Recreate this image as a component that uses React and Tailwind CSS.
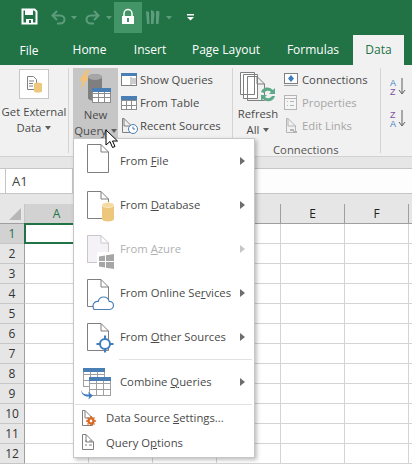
import { Fragment } from "react";

const FONT = "font-['Open_Sans','Noto_Sans',sans-serif]";

const Doc = ({ x = 12, y = 8, w = 21, h = 27, color = "#7f7f7f", fill = "none" }) => (
  <path
    d={`M${x + 0.5} ${y + 0.5}H${x + w - 7}L${x + w + 0.5} ${y + 8}V${y + h + 0.5}H${x + 0.5}ZM${x + w - 7} ${y + 0.5}V${y + 8}H${x + w + 0.5}`}
    fill={fill}
    stroke={color}
  />
);

const FileIcon = () => (
  <svg width="45" height="44" className="shrink-0">
    <Doc y={5} h={28} />
  </svg>
);

const DbIcon = () => (
  <svg width="45" height="44" className="shrink-0">
    <Doc y={8} />
    <path d="M27 22a6 2.500 0 0 1 12 0v14a6 2.500 0 0 1-12 0z" fill="#edc77c" />
    <ellipse cx="33" cy="22" rx="6" ry="2.500" fill="#f5d99f" stroke="#fff" strokeWidth="0.5" />
  </svg>
);

const AzureIcon = () => (
  <svg width="45" height="44" className="shrink-0">
    <Doc y={8} color="#c8c6c9" fill="#f4f2f6" />
    <path d="M22 25h18v17H22z" fill="#fff" />
    <path d="M24 29.500l6-1v5.500h-6zM31 28.300l8-1.300v7h-8zM24 35h6v5.500l-6-1zM31 35h8v7l-8-1.300z" fill="#a6a6a6" />
  </svg>
);

const CloudIcon = () => (
  <svg width="45" height="44" className="shrink-0">
    <Doc y={8} />
    <path
      d="M19 38.500h15c2.500 0 4.500-1.800 4.500-4.200s-2-4-4.300-4c-.8-2.800-3-4.300-5.500-4.300-2.700 0-4.900 1.800-5.500 4.500-2.800-.3-5.200 1.500-5.200 4.200 0 2.300 1 3.800 1 3.800z"
      fill="#fff"
      stroke="#4a7fb5"
      strokeWidth="1.200"
    />
  </svg>
);

const OtherIcon = () => (
  <svg width="45" height="44" className="shrink-0">
    <Doc y={8} />
    <circle cx="30" cy="29" r="5" fill="#fff" stroke="#3f7cbf" strokeWidth="2" />
    <path d="M30 20.500v4M30 33.500v4M21.500 29h4M34.500 29h4" stroke="#3f7cbf" strokeWidth="2" />
  </svg>
);

const Table = ({ x, y, w, h, cols, rows, head = "#4a7fb5", line = "#a0a0a0" }) => (
  <g>
    <rect x={x + 0.5} y={y + 0.5} width={w} height={h} fill="#fff" stroke={line} />
    {Array.from({ length: cols - 1 }, (_, i) => (
      <path key={i} d={`M${x + 0.5 + Math.round(((i + 1) * w) / cols)} ${y}v${h}`} stroke={line} />
    ))}
    {Array.from({ length: rows - 1 }, (_, i) => (
      <path key={i} d={`M${x} ${y + 0.5 + Math.round(((i + 1) * h) / rows)}h${w}`} stroke={line} />
    ))}
    <rect x={x} y={y} width={w + 1} height="4" fill={head} />
  </g>
);

const CombineIcon = () => (
  <svg width="45" height="44" className="shrink-0">
    <Table x={8} y={8} w={21} h={18} cols={3} rows={3} />
    <Table x={14} y={17} w={21} h={18} cols={3} rows={3} />
    <path d="M6 30c1 3.500 4 5 8 4.500l-1-2.500 5 3.500-4.500 4 .5-3c-4.500.5-7.500-2-8-6.500z" fill="#3f7cbf" />
  </svg>
);

const SettingsIcon = () => (
  <svg width="24" height="24" className="shrink-0">
    <Doc x={2} y={4} w={10} h={15} />
    <circle cx="11" cy="15" r="2.500" fill="#fff" stroke="#d9651e" strokeWidth="2.200" />
    <path d="M11 10v2M11 18v2M6 15h2M14 15h2M7.500 11.500l1 1M14.500 11.500l-1 1M7.500 18.500l1-1M14.500 18.500l-1-1" stroke="#d9651e" strokeWidth="1.500" />
  </svg>
);

const OptionsIcon = () => (
  <svg width="24" height="24" className="shrink-0">
    <Doc x={2} y={3} w={11} h={15} />
    <path d="M5 10h2M9 10h3M5 14h2M9 14h3" stroke="#7f7f7f" />
  </svg>
);

const menuItems = [
  { pre: "From ", key: "F", post: "ile", Icon: FileIcon },
  { pre: "From ", key: "D", post: "atabase", Icon: DbIcon },
  { pre: "From ", key: "A", post: "zure", Icon: AzureIcon, disabled: true },
  { pre: "From Online Se", key: "r", post: "vices", Icon: CloudIcon },
  { pre: "From ", key: "O", post: "ther Sources", Icon: OtherIcon, sep: true },
  { pre: "Combine ", key: "Q", post: "ueries", Icon: CombineIcon, sep: true },
];

const QueryMenu = () => (
  <div className={`absolute left-[73px] top-[138px] w-[182px] h-[320px] pl-px bg-white border border-[#c6c6c6] shadow-[2px_2px_4px_rgba(0,0,0,0.25)] text-[11.3px] text-[#4a4a4a] ${FONT}`}>
    {menuItems.map(({ pre, key, post, Icon, disabled, sep }) => (
      <Fragment key={pre + key}>
        <div className={`flex items-center h-11 ${disabled ? "text-[#b1b1b1]" : ""}`}>
          <Icon />
          <span className="whitespace-nowrap">
            {pre}
            <u>{key}</u>
            {post}
          </span>
          <span className={`ml-auto mr-[9px] w-0 h-0 border-y-4 border-y-transparent border-l-[5px] ${disabled ? "border-l-[#c6c6c6]" : "border-l-[#6d6d6d]"}`} />
        </div>
        {sep && <div className={`h-px bg-[#e1e1e1] mr-0.5 ${key === "O" ? "ml-[44px]" : "ml-0"}`} />}
      </Fragment>
    ))}
    <div className="flex items-center h-6 mt-px pl-[5px] gap-[2px]">
      <SettingsIcon />
      <span>
        Data Source <u>S</u>ettings...
      </span>
    </div>
    <div className="flex items-center h-6 mt-px pl-[5px] gap-[2px]">
      <OptionsIcon />
      <span>
        Query O<u>p</u>tions
      </span>
    </div>
  </div>
);

const Caret = ({ color = "#5f5f5f" }) => (
  <span className="inline-block ml-1 mb-0.5 w-0 h-0 border-x-[3.5px] border-x-transparent border-t-4 align-middle" style={{ borderTopColor: color }} />
);

const TitleBar = () => (
  <div className="h-[65px] bg-[#217346] flex flex-col">
    <div className="h-[35px] flex items-start">
      <svg width="210" height="35" className="shrink-0">
        <path d="M22.500 9.500h12l2 2v12h-14z" fill="none" stroke="#fff" strokeWidth="2" />
        <path d="M25 10h8v5h-8zM26 19h7v5h-7z" fill="#fff" />
        <path d="M29 20h2v3h-2z" fill="#217346" />
        <g stroke="#5d9c7c" strokeWidth="2" fill="none">
          <path d="M53 15.500h7c3 0 4.500 2 4.500 4s-1.500 4-4.500 4h-3" />
          <path d="M57 11l-4.500 4.500 4.500 4.500" />
          <path d="M98 15.500h-7c-3 0-4.500 2-4.500 4s1.500 4 4.500 4h3" />
          <path d="M94 11l4.500 4.500-4.500 4.500" />
        </g>
        <path d="M71 16h6l-3 3.500zM106 16h6l-3 3.500zM166 16h6l-3 3.500z" fill="#5d9c7c" />
        <rect x="114" y="2" width="28" height="31" fill="#439467" />
        <path d="M124 17v-3.500a4 4 0 0 1 8 0V17" fill="none" stroke="#fff" strokeWidth="1.500" />
        <rect x="122" y="16" width="12" height="8" fill="#fff" />
        <rect x="127" y="18" width="2" height="4" fill="#439467" />
        <path d="M146 11l3 1 .5 12h-2.500zM151 10l2.500 1 1 3-1 10h-2.500zM156 11h3l.5 2-1 11h-2.500z" fill="#5d9c7c" />
        <path d="M187 14h7v1.500h-7zM187 17h7l-3.500 3.500z" fill="#fff" />
      </svg>
    </div>
    <div className={`flex h-[30px] items-start text-[12px] leading-[16px] text-white text-center ${FONT}`}>
      <span className="w-[58px] mt-[8px]">File</span>
      <span className="w-[63px] mt-[7px]">Home</span>
      <span className="w-[58px] mt-[7px]">Insert</span>
      <span className="w-[94px] mt-[7px]">Page Layout</span>
      <span className="w-[80px] mt-[7px]">Formulas</span>
      <span className="w-[51px] h-[30px] pt-[7px] bg-[#f1f1f1] text-[#217346]">Data</span>
    </div>
  </div>
);

const RibbonRow = ({ icon, label, dim }) => (
  <div className={`flex items-center h-[23px] gap-[1px] whitespace-nowrap ${dim ? "text-[#a6a6a6]" : ""}`}>
    <svg width="18" height="18" className="shrink-0">
      {icon}
    </svg>
    <span>{label}</span>
  </div>
);

const Ribbon = () => (
  <div className={`h-[92px] bg-[#f1f1f1] border-b border-[#d2d2d2] flex text-[11.3px] leading-[16px] text-[#4a4a4a] ${FONT}`}>
    {/* get external data */}
    <div className="w-[69px] shrink-0 my-[3px] border-r border-[#d4d4d4] flex flex-col items-center">
      <div className="mt-px w-[30px] h-[30px] bg-white border border-[#c6c6c6] flex items-center justify-center">
        <svg width="16" height="18">
          <path d="M1.500 1.500h6l3 3v10h-9z" fill="#fff" stroke="#808080" />
          <path d="M3 6h5M3 8.500h4M3 11h4" stroke="#808080" />
          <path d="M8 9a4 1.500 0 0 1 8 0v7a4 1.500 0 0 1-8 0z" fill="#edc77c" />
        </svg>
      </div>
      <span className="mt-[5px] whitespace-nowrap">Get External</span>
      <span>
        Data
        <Caret />
      </span>
    </div>

    {/* new query */}
    <div className="ml-1 w-[45px] h-[70px] mt-[3px] bg-[#c6c6c6] flex flex-col items-center shrink-0">
      <svg width="45" height="36" className="shrink-0">
        <path d="M13 2h4l-4 6h4L7 22l3-9H6z" fill="#f0c27a" />
        <path d="M15 9a7 3 0 0 1 14 0v21a7 3 0 0 1-14 0z" fill="#7f7f7f" />
        <ellipse cx="22" cy="9" rx="7" ry="3" fill="#a6a6a6" />
        <Table x={19} y={20} w={18} h={14} cols={3} rows={3} line="#8d8d8d" />
      </svg>
      <span className="mt-[3px]">New</span>
      <span className="whitespace-nowrap">
        Query
        <Caret />
      </span>
    </div>

    {/* queries */}
    <div className="ml-[3px] w-[111px] pt-[3px] shrink-0">
      <RibbonRow
        label="Show Queries"
        icon={
          <g>
            <rect x="0.500" y="2.500" width="15" height="12" fill="#fff" stroke="#7f7f7f" />
            <rect x="0" y="2" width="16" height="3" fill="#4a7fb5" />
            <path d="M10 6v8M11 8h4M11 10h4M11 12h4" stroke="#9a9a9a" />
          </g>
        }
      />
      <RibbonRow
        label="From Table"
        icon={<Table x={0} y={2} w={15} h={13} cols={3} rows={3} line="#8d8d8d" />}
      />
      <RibbonRow
        label="Recent Sources"
        icon={
          <g>
            <Doc x={1} y={1} w={9} h={14} />
            <circle cx="12" cy="12" r="4.500" fill="#fff" stroke="#4a7fb5" />
            <path d="M12 9.500V12h2" stroke="#4a7fb5" fill="none" />
          </g>
        }
      />
    </div>

    <div className="w-px my-[3px] bg-[#d4d4d4] shrink-0" />

    {/* connections */}
    <div className="w-[147px] shrink-0 flex flex-col relative">
      <div className="flex">
        <div className="w-[50px] flex flex-col items-center">
          <svg width="36" height="32" className="mt-[7px] shrink-0">
            <path d="M0.500 0.500h14v22h-14zM3.500 2.500h14v24h-14z" fill="#fff" stroke="#7f7f7f" />
            <Doc x={7} y={4} w={17} h={24} />
            <path d="M21 20a7 7 0 0 1 12-2l2-2v6h-6l2-2a4.500 4.500 0 0 0-7 1zM35 24a7 7 0 0 1-12 3l-2 2v-6h6l-2 2a4.500 4.500 0 0 0 7-1z" fill="#5fa889" />
          </svg>
          <span className="mt-[2px]">Refresh</span>
          <span>
            All
            <Caret />
          </span>
        </div>
        <div className="pt-[3px]">
          <RibbonRow
            label="Connections"
            icon={
              <g>
                <rect x="1.500" y="2.500" width="13" height="10" fill="#fff" stroke="#7f7f7f" />
                <path d="M8 4l3 3.500-3 3.500-3-3.500z" fill="#3f7cbf" />
                <path d="M1 14.500h14" stroke="#a0a0a0" />
              </g>
            }
          />
          <RibbonRow
            dim
            label="Properties"
            icon={
              <g>
                <rect x="1.500" y="1.500" width="12" height="14" fill="#f5f5f5" stroke="#b5b5b5" />
                <path d="M2 4.500h11M4 7.500h1M7 7.500h4M4 11.500h1M7 11.500h4" stroke="#b5b5b5" />
              </g>
            }
          />
          <RibbonRow
            dim
            label="Edit Links"
            icon={
              <g>
                <Doc x={3} y={1} w={9} h={14} color="#b5b5b5" />
                <path d="M7 13h4M10 15h4" stroke="#b5b5b5" strokeWidth="2" />
              </g>
            }
          />
        </div>
      </div>
      <span className="absolute left-[40px] top-[77px] text-[#555] whitespace-nowrap">Connections</span>
    </div>

    <div className="w-px my-[3px] h-[85px] bg-[#d4d4d4] shrink-0" />

    {/* sort */}
    <svg width="25" height="60" className="mt-[12px] shrink-0">
      <text x="9" y="9" fontSize="9" fill="#3f7cbf" fontFamily="Liberation Sans">A</text>
      <text x="9" y="18" fontSize="9" fill="#7b4fa6" fontFamily="Liberation Sans">Z</text>
      <path d="M21 1v15M18 13l3 4 3-4" stroke="#5f5f5f" fill="none" />
      <text x="9" y="41" fontSize="9" fill="#7b4fa6" fontFamily="Liberation Sans">Z</text>
      <text x="9" y="50" fontSize="9" fill="#3f7cbf" fontFamily="Liberation Sans">A</text>
      <path d="M21 33v15M18 45l3 4 3-4" stroke="#5f5f5f" fill="none" />
    </svg>
  </div>
);

const FormulaBar = () => (
  <div className="bg-[#e6e6e6]">
    <div className="h-[11px]" />
    <div className="h-[26px] bg-[#fdfdfd] border-y border-[#c6c6c6] flex">
      <div className={`ml-[5px] w-[68px] border-x border-[#c6c6c6] bg-white pl-[6px] text-[13px] leading-[24px] text-[#444] ${FONT}`}>A1</div>
    </div>
    <div className="h-[10px]" />
  </div>
);

// B, C and D sit behind the open menu
const columns = ["A", "", "", "", "E", "F", ""];
const rows = [1, 2, 3, 4, 5, 6, 7, 8, 9, 10, 11, 12];

const Sheet = () => (
  <div className={`text-[12px] text-[#333] ${FONT}`}>
    <div className="flex h-[20px] bg-[#e6e6e6] border-b border-[#9f9f9f]">
      <div className="w-[25px] shrink-0 relative border-r border-[#c6c6c6]">
        <span className="absolute right-[3px] bottom-[3px] w-0 h-0 border-l-[12px] border-l-transparent border-b-[12px] border-b-[#b7b7b7]" />
      </div>
      {columns.map((c, i) => (
        <div
          key={i}
          className={`w-16 shrink-0 text-center leading-[19px] border-r border-[#9f9f9f] ${c === "A" ? "bg-[#d2d2d2] text-[#217346]" : "text-[#222]"}`}
        >
          {c}
        </div>
      ))}
    </div>
    {rows.map((r) => (
      <div key={r} className="flex h-[20px]">
        <div
          className={`w-[25px] shrink-0 text-center leading-[19px] border-r border-b border-r-[#9f9f9f] border-b-[#c6c6c6] ${r === 1 ? "bg-[#d2d2d2] text-[#217346]" : "bg-[#e6e6e6]"}`}
        >
          {r}
        </div>
        {columns.map((c, i) => (
          <div key={i} className="w-16 shrink-0 bg-white border-r border-b border-[#d4d4d4] relative">
            {r === 1 && i === 0 && <span className="absolute -left-px -top-px -right-px -bottom-px border-2 border-[#217346]" />}
          </div>
        ))}
      </div>
    ))}
  </div>
);

const Cursor = () => (
  <svg width="14" height="20" className="absolute left-[105px] top-[129px]">
    <path d="M1 1v15l4-3.500 2.500 6 2.500-1-2.500-5.500h5z" fill="#fff" stroke="#000" />
  </svg>
);

export default function App() {
  return (
    <div className="relative w-[412px] h-[464px] overflow-hidden bg-white">
      <TitleBar />
      <Ribbon />
      <FormulaBar />
      <Sheet />
      <QueryMenu />
      <Cursor />
    </div>
  );
}
